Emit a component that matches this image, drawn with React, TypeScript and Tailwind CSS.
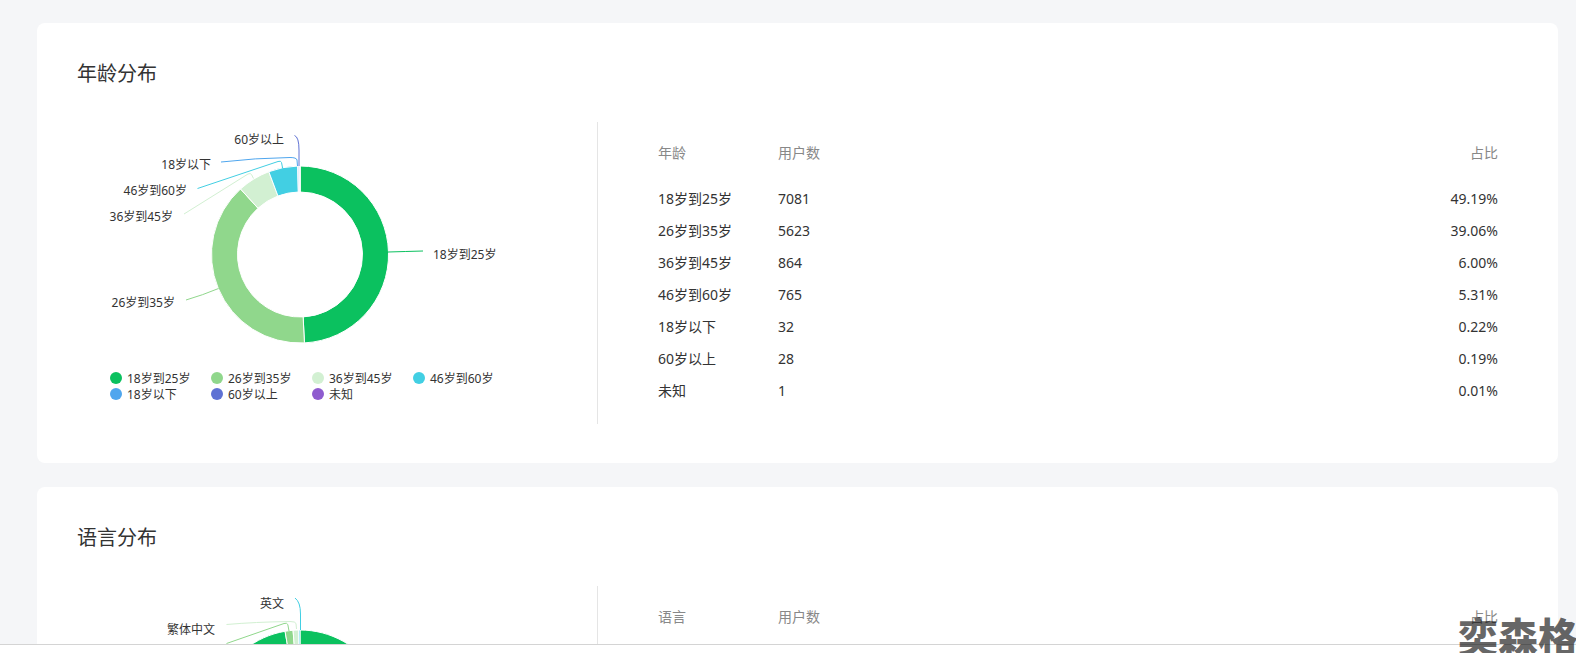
type Slice = { name: string; value: number; color: string };
type Row = { name: string; users: string; pct: string };

const ageSlices: Slice[] = [
  { name: "18岁到25岁", value: 49.19, color: "#0bc15f" },
  { name: "26岁到35岁", value: 39.06, color: "#90d78c" },
  { name: "36岁到45岁", value: 6.0, color: "#d2f0d2" },
  { name: "46岁到60岁", value: 5.31, color: "#42cfe3" },
  { name: "18岁以下", value: 0.22, color: "#4fa6ee" },
  { name: "60岁以上", value: 0.19, color: "#5f72d4" },
  { name: "未知", value: 0.01, color: "#8f5ccf" },
];

const langSlices: Slice[] = [
  { name: "简体中文", value: 97.3, color: "#0bc15f" },
  { name: "其他", value: 1.45, color: "#90d78c" },
  { name: "繁体中文", value: 1.0, color: "#d2f0d2" },
  { name: "英文", value: 0.25, color: "#42cfe3" },
];

const ageRows: Row[] = [
  { name: "18岁到25岁", users: "7081", pct: "49.19%" },
  { name: "26岁到35岁", users: "5623", pct: "39.06%" },
  { name: "36岁到45岁", users: "864", pct: "6.00%" },
  { name: "46岁到60岁", users: "765", pct: "5.31%" },
  { name: "18岁以下", users: "32", pct: "0.22%" },
  { name: "60岁以上", users: "28", pct: "0.19%" },
  { name: "未知", users: "1", pct: "0.01%" },
];

// annular sector, angles in degrees clockwise from 12 o'clock
function sector(from: number, to: number) {
  const cx = 300;
  const cy = 254.5;
  const R = 88.5;
  const r = 62.5;
  const pt = (rad: number, deg: number) => {
    const a = (deg * Math.PI) / 180;
    return `${(cx + rad * Math.sin(a)).toFixed(2)} ${(cy - rad * Math.cos(a)).toFixed(2)}`;
  };
  const big = to - from > 180 ? 1 : 0;
  return `M${pt(R, from)} A${R} ${R} 0 ${big} 1 ${pt(R, to)} L${pt(r, to)} A${r} ${r} 0 ${big} 0 ${pt(r, from)} Z`;
}

function Donut({ slices }: { slices: Slice[] }) {
  const total = slices.reduce((s, x) => s + x.value, 0);
  let angle = 0;
  return (
    <>
      {slices.map((s) => {
        const from = angle;
        angle += (s.value / total) * 360;
        return <path key={s.name} d={sector(from, angle)} fill={s.color} stroke="#fff" strokeWidth={1} />;
      })}
    </>
  );
}

function AgeChart() {
  const legend = ageSlices.map((s, i) => ({
    ...s,
    x: 116 + (i % 4) * 101,
    y: i < 4 ? 378 : 394,
  }));
  return (
    <svg viewBox="37 122 560 302" className="w-[560px] h-[302px] shrink-0">
      <Donut slices={ageSlices} />
      <g fill="none" strokeWidth={1}>
        <path d="M388 252 Q405 251.5 423 251" stroke="#0bc15f" />
        <path d="M218.5 288.5 Q203 295 186 300" stroke="#90d78c" />
        <path d="M253.5 178.5 L251.5 174.5 Q250.5 172.8 248 174 L184 214" stroke="#d2f0d2" />
        <path d="M282.7 168.5 L281.5 162.5 Q281 160.5 278 161.5 L197.5 188.5" stroke="#42cfe3" />
        <path d="M297.5 166 L297 160 Q296.5 157.5 290 157.5 Q255 158 221 162" stroke="#4fa6ee" />
        <path d="M299 166 L299 150 Q299 137 294.5 135.5" stroke="#5f72d4" />
      </g>
      <g fontSize={12} fill="#333" dominantBaseline="central">
        <text x={284} y={139} textAnchor="end">60岁以上</text>
        <text x={211} y={164.5} textAnchor="end">18岁以下</text>
        <text x={187} y={190.5} textAnchor="end">46岁到60岁</text>
        <text x={173} y={216.5} textAnchor="end">36岁到45岁</text>
        <text x={175} y={302.5} textAnchor="end">26岁到35岁</text>
        <text x={433} y={254.5}>18岁到25岁</text>
      </g>
      {legend.map((l) => (
        <g key={l.name}>
          <circle cx={l.x} cy={l.y} r={6} fill={l.color} />
          <text x={l.x + 11} y={l.y} fontSize={12} fill="#333" dominantBaseline="central">
            {l.name}
          </text>
        </g>
      ))}
    </svg>
  );
}

function LangChart() {
  return (
    <svg viewBox="37 122 560 302" className="w-[560px] h-[302px] shrink-0">
      <Donut slices={langSlices} />
      <g fill="none" strokeWidth={1}>
        <path d="M289 167 L287.8 160.5 Q287 158.5 284 159.5 L226.5 179.5" stroke="#90d78c" />
        <path d="M296.5 165 L296 159.5 Q295.5 157.5 290 157.5 Q255 158 226.5 160.5" stroke="#d2f0d2" />
        <path d="M300.5 166 L300.5 150 Q300.5 138 295 134" stroke="#42cfe3" />
      </g>
      <g fontSize={12} fill="#333" dominantBaseline="central">
        <text x={284} y={139} textAnchor="end">英文</text>
        <text x={215} y={165} textAnchor="end">繁体中文</text>
      </g>
    </svg>
  );
}

function Card({ title, head, rows, chart }: { title: string; head: string; rows: Row[]; chart: React.ReactNode }) {
  return (
    <section className="bg-white rounded-lg h-[440px] shrink-0">
      <h2 className="pl-[40px] pt-[39px] h-[99px] text-[20px] leading-[24px] text-[#333] font-normal">{title}</h2>
      <div className="flex">
        {chart}
        <div className="flex-1 h-[302px] border-l border-[#e5e5e5] pl-[60px] pr-[60px]">
          <table className="w-full text-[14px] text-[#333]">
            <thead>
              <tr className="h-[60px] text-[#888]">
                <th className="w-[120px] font-normal text-left">{head}</th>
                <th className="font-normal text-left">用户数</th>
                <th className="font-normal text-right">占比</th>
              </tr>
            </thead>
            <tbody>
              {rows.map((r) => (
                <tr key={r.name} className="h-[32px]">
                  <td>{r.name}</td>
                  <td>{r.users}</td>
                  <td className="text-right">{r.pct}</td>
                </tr>
              ))}
            </tbody>
          </table>
        </div>
      </div>
    </section>
  );
}

export default function App() {
  return (
    <div className="relative h-[653px] overflow-hidden bg-white font-['Noto_Sans','Noto_Sans_CJK_SC',sans-serif]">
      <main className="h-[644px] overflow-hidden bg-[#f5f6f8] pl-[37px] pr-[18px] pt-[23px] flex flex-col gap-[24px]">
        <Card title="年龄分布" head="年龄" rows={ageRows} chart={<AgeChart />} />
        <Card title="语言分布" head="语言" rows={[]} chart={<LangChart />} />
      </main>
      <div className="h-[9px] border-t border-[#d4d4d4] bg-white" />
      <div className="absolute left-[1458px] top-[613px] whitespace-nowrap text-[40px] leading-[44px] font-black text-black/60 font-['Noto_Sans_CJK_SC',sans-serif]">
        奕森格
      </div>
    </div>
  );
}
